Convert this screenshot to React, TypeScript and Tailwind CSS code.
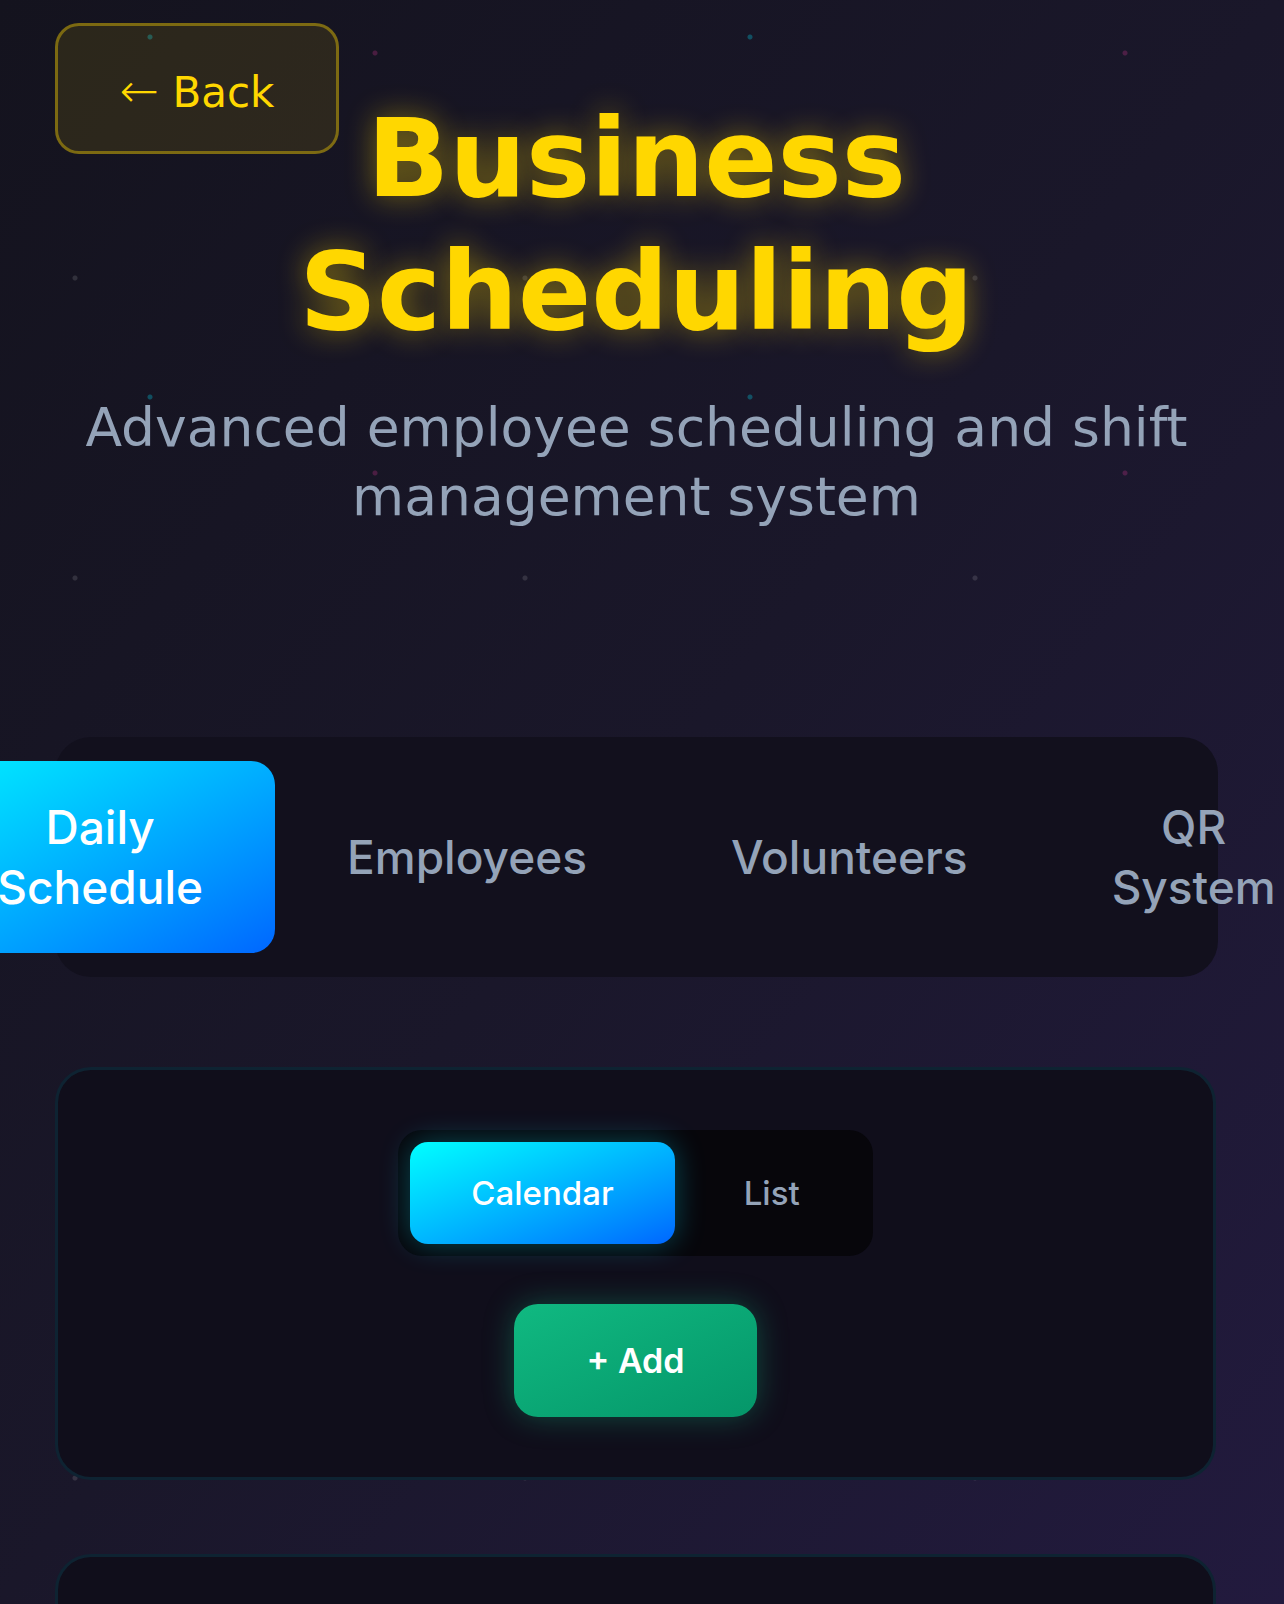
import React from "react";

function Stars() {
  return (
    <div className="pointer-events-none absolute inset-0">
      <div className="absolute inset-0 [background-image:radial-gradient(circle_at_150px_37px,rgba(0,229,255,0.28)_0,rgba(0,229,255,0.28)_2px,transparent_3px)] [background-size:600px_360px]" />
      <div className="absolute inset-0 [background-image:radial-gradient(circle_at_375px_53px,rgba(255,60,170,0.22)_0,rgba(255,60,170,0.22)_2px,transparent_3px)] [background-size:750px_420px]" />
      <div className="absolute inset-0 [background-image:radial-gradient(circle_at_75px_278px,rgba(255,255,255,0.12)_0,rgba(255,255,255,0.12)_2px,transparent_3px)] [background-size:450px_300px]" />
    </div>
  );
}

export default function App() {
  const tabs = [
    { label: "Daily Schedule", active: true },
    { label: "Employees", active: false },
    { label: "Volunteers", active: false },
    { label: "QR System", active: false },
  ];
  return (
    <div className="relative h-[1604px] w-full overflow-hidden bg-gradient-to-br from-[#14131e] via-[#1a172a] to-[#221a3e]">
      <div className="relative z-10 pl-[55px] pr-[66px]">
        <header className="relative pt-[92px]">
          <button className="absolute left-0 top-[23px] flex h-[131px] w-[284px] items-center justify-center rounded-[24px] border-[3px] border-[rgba(255,215,0,0.38)] bg-[rgba(255,215,0,0.1)] text-[42px] text-[#FFD700] [font-family:'DejaVu_Sans',sans-serif]">
            <span className="pt-[6px]">
              <span className="text-[47px] font-extralight">←</span> Back
            </span>
          </button>
          <h1 className="text-center text-[108px] font-bold leading-[133px] text-[#FFD700] [font-family:'DejaVu_Sans',sans-serif] [text-shadow:0_0_30px_rgba(255,215,0,0.45)]">
            Business
            <br />
            Scheduling
          </h1>
          <p className="mt-[35px] text-center text-[53.5px] leading-[69px] text-[#94a3b8] [font-family:'DejaVu_Sans',sans-serif]">
            Advanced employee scheduling and shift management system
          </p>
        </header>

        <nav className="mt-[206px] flex justify-center rounded-[36px] bg-[#12101d] p-[24px] [font-family:Inter,sans-serif]">
          {tabs.map((t) =>
            t.active ? (
              <button
                key={t.label}
                className="rounded-[24px] bg-gradient-to-br from-[#00f0ff] to-[#0066ff] px-[72px] py-[36px] text-center text-[46px] font-medium leading-[60px] text-white"
              >
                {t.label}
              </button>
            ) : (
              <button
                key={t.label}
                className="rounded-[24px] px-[72px] py-[36px] text-center text-[46px] font-medium leading-[60px] text-[#94a3b8]"
              >
                {t.label}
              </button>
            )
          )}
        </nav>

        <section className="mr-[2px] mt-[90px] flex flex-col items-center gap-[48px] rounded-[36px] border-[3px] border-[rgba(0,229,255,0.1)] bg-[#100e1b] p-[60px] [font-family:Inter,sans-serif]">
          <div className="flex gap-[8px] rounded-[24px] bg-[#07060b] p-[12px]">
            <button className="h-[102px] rounded-[18px] bg-gradient-to-br from-[#00ffff] to-[#0066ff] px-[61px] pt-[2px] text-[33px] font-medium text-white shadow-[0_0_30px_rgba(0,229,255,0.3)]">
              Calendar
            </button>
            <button className="h-[102px] rounded-[18px] px-[61px] pt-[2px] text-[33px] font-medium text-[#94a3b8]">
              List
            </button>
          </div>
          <button className="h-[113px] rounded-[24px] bg-gradient-to-br from-[#10b981] to-[#059669] px-[72px] text-[34px] font-semibold text-white shadow-[0_0_30px_rgba(16,185,129,0.35)]">
            + Add
          </button>
        </section>

        <section className="mr-[2px] mt-[74px] h-[400px] rounded-[36px] border-[3px] border-[rgba(0,229,255,0.1)] bg-[#100e1b]" />
      </div>
      <Stars />
    </div>
  );
}
